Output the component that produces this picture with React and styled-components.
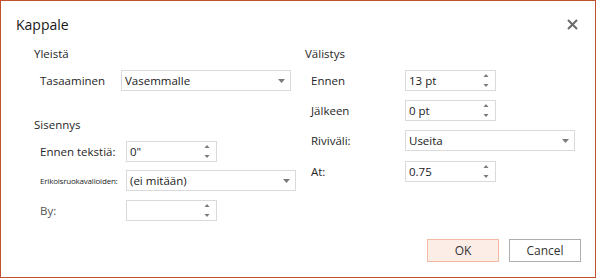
import React from 'react';
import styled, { createGlobalStyle } from 'styled-components';

const GlobalStyle = createGlobalStyle`
  html, body {
    margin: 0;
    padding: 0;
    background: #ffffff;
  }
  * { box-sizing: border-box; }
`;

function CloseIcon() {
  return (
    <svg width="11" height="11" viewBox="0 0 11 11">
      <path d="M1 1 L10 10 M10 1 L1 10" stroke="#6a6a6a" strokeWidth="2" />
    </svg>
  );
}

function Spinner({ value }) {
  return (
    <SpinBox>
      <span>{value}</span>
      <Arrows>
        <svg width="6" height="15" viewBox="0 0 6 15">
          <path d="M0.5 4 L3 1 L5.5 4 Z" fill="#7a7a7a" />
          <path d="M0.5 11 L3 14 L5.5 11 Z" fill="#7a7a7a" />
        </svg>
      </Arrows>
    </SpinBox>
  );
}

function Select({ value, width }) {
  return (
    <SelectBox $width={width}>
      <span>{value}</span>
      <svg width="7" height="4" viewBox="0 0 7 4">
        <path d="M0 0 L7 0 L3.5 4 Z" fill="#7a7a7a" />
      </svg>
    </SelectBox>
  );
}

export default function App() {
  return (
    <>
      <GlobalStyle />
      <Dialog>
        <Header>
          <Title>Kappale</Title>
          <CloseButton><CloseIcon /></CloseButton>
        </Header>
        <Body>
          <Column $first>
            <Heading>Yleistä</Heading>
            <Row $label={81}>
              <Label>Tasaaminen</Label>
              <Select value="Vasemmalle" width={170} />
            </Row>
            <Heading $top={26}>Sisennys</Heading>
            <Row $label={86}>
              <Label>Ennen tekstiä:</Label>
              <Spinner value={'0"'} />
            </Row>
            <Row $label={86} $gap={8}>
              <Label $small>Erikoisruokavalioiden:</Label>
              <Select value="(ei mitään)" width={170} />
            </Row>
            <Row $label={86} $gap={9}>
              <Label $muted>By:</Label>
              <Spinner value="" />
            </Row>
          </Column>
          <Column>
            <Heading>Välistys</Heading>
            <Row $label={94}>
              <Label>Ennen</Label>
              <Spinner value="13 pt" />
            </Row>
            <Row $label={94} $gap={9}>
              <Label>Jälkeen</Label>
              <Spinner value="0 pt" />
            </Row>
            <Row $label={94} $gap={9}>
              <Label>Riviväli:</Label>
              <Select value="Useita" width={170} />
            </Row>
            <Row $label={94} $gap={10}>
              <Label>At:</Label>
              <Spinner value="0.75" />
            </Row>
          </Column>
        </Body>
        <Footer>
          <Button $primary>OK</Button>
          <Button>Cancel</Button>
        </Footer>
      </Dialog>
    </>
  );
}

const Dialog = styled.div`
  width: 596px;
  height: 278px;
  border: 1px solid #c1502e;
  background: #fff;
  font-family: "Open Sans", "Noto Sans", sans-serif;
  color: #262626;
  display: flex;
  flex-direction: column;
`;

const Header = styled.div`
  display: flex;
  justify-content: space-between;
  align-items: center;
  padding: 13px 17px 0 15px;
  height: 34px;
`;

const Title = styled.div`
  font-size: 14px;
  line-height: 20px;
  color: #1a1a1a;
`;

const CloseButton = styled.div`
  display: flex;
  width: 11px;
  height: 11px;
`;

const Body = styled.div`
  display: flex;
  flex: 1;
`;

const Column = styled.div`
  display: flex;
  flex-direction: column;
  padding-left: ${p => (p.$first ? 33 : 0)}px;
  width: ${p => (p.$first ? '304px' : 'auto')};
  flex: ${p => (p.$first ? 'none' : '1')};
  padding-top: 11px;
`;

const Heading = styled.div`
  font-size: 11.5px;
  line-height: 16px;
  height: 16px;
  margin-top: ${p => p.$top || 0}px;
  margin-bottom: 8px;
`;

const Row = styled.div`
  display: grid;
  grid-template-columns: ${p => p.$label}px auto;
  align-items: center;
  height: 21px;
  margin-top: ${p => p.$gap || 0}px;
  padding-left: 6px;
`;

const Label = styled.div`
  font-size: ${p => (p.$small ? 8 : 11.5)}px;
  letter-spacing: ${p => (p.$small ? '-0.2px' : '0')};
  color: ${p => (p.$muted ? '#555' : '#262626')};
  white-space: nowrap;
`;

const SpinBox = styled.div`
  width: 91px;
  height: 21px;
  border: 1px solid #dadada;
  display: flex;
  align-items: center;
  justify-content: space-between;
  padding: 0 6px 0 3px;
  font-size: 11.5px;
  color: #1a1a1a;
`;

const Arrows = styled.div`
  display: flex;
  align-items: center;
`;

const SelectBox = styled.div`
  width: ${p => p.$width}px;
  height: 21px;
  border: 1px solid #dadada;
  display: flex;
  align-items: center;
  justify-content: space-between;
  padding: 0 5px 0 3px;
  font-size: 11.5px;
  color: #1a1a1a;
`;

const Footer = styled.div`
  display: flex;
  justify-content: flex-end;
  gap: 10px;
  padding: 0 14px 15px 0;
`;

const Button = styled.div`
  width: 72px;
  height: 23px;
  display: flex;
  align-items: center;
  justify-content: center;
  font-size: 12px;
  color: #333;
  background: ${p => (p.$primary ? '#fcede7' : '#fff')};
  border: 1px solid ${p => (p.$primary ? '#f3b9a1' : '#adadad')};
`;
